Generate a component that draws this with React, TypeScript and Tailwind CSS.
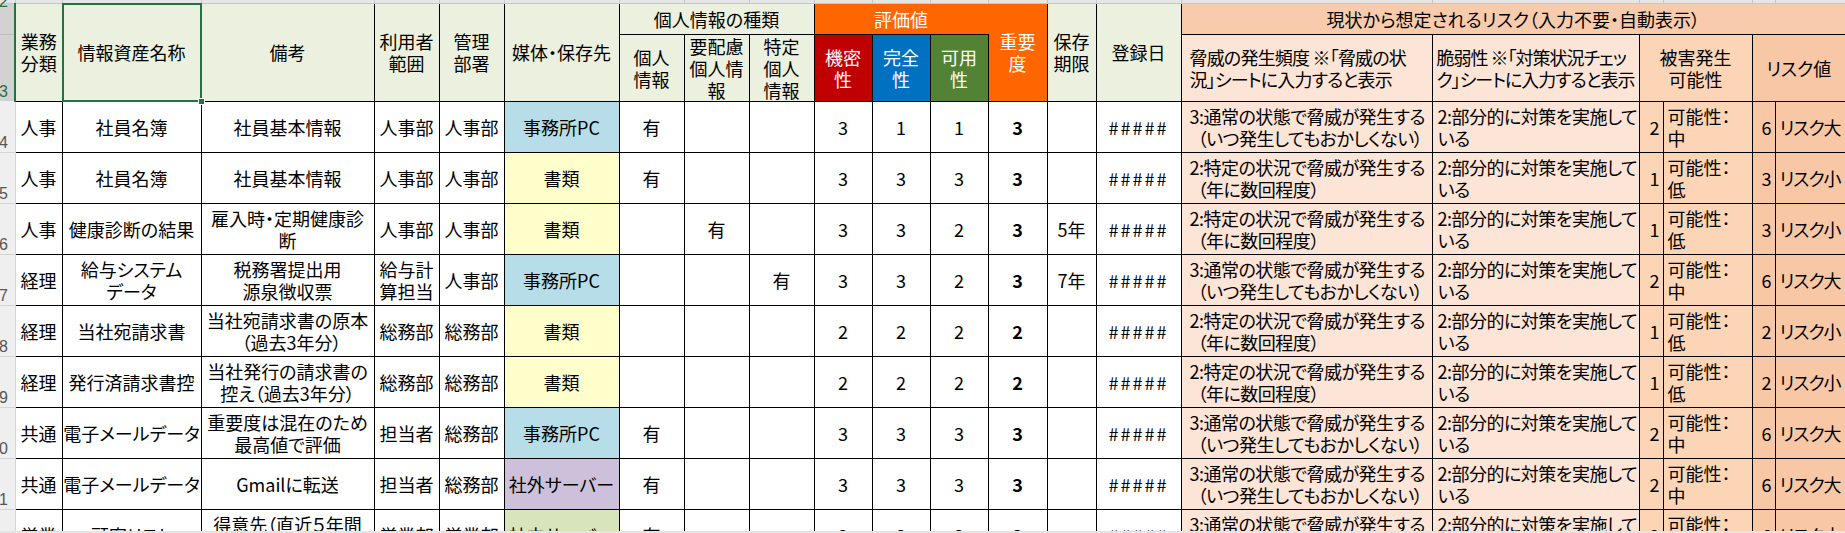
import React from "react";

type Media = "pc" | "doc" | "ext" | "int";

type Row = {
  no: number;
  biz: string;
  name: string[];
  note: string[];
  user: string[];
  dept: string;
  media: Media;
  flags: [boolean, boolean, boolean];
  c: number;
  i: number;
  a: number;
  imp: number;
  keep?: string;
  threat: 2 | 3;
  damage: 1 | 2;
  risk: number;
};

const MEDIA: Record<Media, { label: string; cls: string }> = {
  pc: { label: "事務所PC", cls: "bg-[#b7dee8]" },
  doc: { label: "書類", cls: "bg-[#ffffcc]" },
  ext: { label: "社外サーバー", cls: "bg-[#ccc0da]" },
  int: { label: "社内サーバー", cls: "bg-[#d8e4bc]" },
};

const THREAT: Record<2 | 3, string[]> = {
  3: ["3:通常の状態で脅威が発生する", "（いつ発生してもおかしくない）"],
  2: ["2:特定の状況で脅威が発生する", "（年に数回程度）"],
};

const DAMAGE: Record<1 | 2, string> = { 1: "低", 2: "中" };

const ROWS: Row[] = [
  { no: 4, biz: "人事", name: ["社員名簿"], note: ["社員基本情報"], user: ["人事部"], dept: "人事部", media: "pc", flags: [true, false, false], c: 3, i: 1, a: 1, imp: 3, threat: 3, damage: 2, risk: 6 },
  { no: 5, biz: "人事", name: ["社員名簿"], note: ["社員基本情報"], user: ["人事部"], dept: "人事部", media: "doc", flags: [true, false, false], c: 3, i: 3, a: 3, imp: 3, threat: 2, damage: 1, risk: 3 },
  { no: 6, biz: "人事", name: ["健康診断の結果"], note: ["雇入時・定期健康診", "断"], user: ["人事部"], dept: "人事部", media: "doc", flags: [false, true, false], c: 3, i: 3, a: 2, imp: 3, keep: "5年", threat: 2, damage: 1, risk: 3 },
  { no: 7, biz: "経理", name: ["給与システム", "データ"], note: ["税務署提出用", "源泉徴収票"], user: ["給与計", "算担当"], dept: "人事部", media: "pc", flags: [false, false, true], c: 3, i: 3, a: 2, imp: 3, keep: "7年", threat: 3, damage: 2, risk: 6 },
  { no: 8, biz: "経理", name: ["当社宛請求書"], note: ["当社宛請求書の原本", "（過去3年分）"], user: ["総務部"], dept: "総務部", media: "doc", flags: [false, false, false], c: 2, i: 2, a: 2, imp: 2, threat: 2, damage: 1, risk: 2 },
  { no: 9, biz: "経理", name: ["発行済請求書控"], note: ["当社発行の請求書の", "控え（過去3年分）"], user: ["総務部"], dept: "総務部", media: "doc", flags: [false, false, false], c: 2, i: 2, a: 2, imp: 2, threat: 2, damage: 1, risk: 2 },
  { no: 10, biz: "共通", name: ["電子メールデータ"], note: ["重要度は混在のため", "最高値で評価"], user: ["担当者"], dept: "総務部", media: "pc", flags: [true, false, false], c: 3, i: 3, a: 3, imp: 3, threat: 3, damage: 2, risk: 6 },
  { no: 11, biz: "共通", name: ["電子メールデータ"], note: ["Gmailに転送"], user: ["担当者"], dept: "総務部", media: "ext", flags: [true, false, false], c: 3, i: 3, a: 3, imp: 3, threat: 3, damage: 2, risk: 6 },
  { no: 12, biz: "営業", name: ["顧客リスト"], note: ["得意先（直近５年間", "の取引先情報）"], user: ["営業部"], dept: "営業部", media: "int", flags: [true, false, false], c: 3, i: 3, a: 3, imp: 3, threat: 3, damage: 2, risk: 6 },
];

const cell = "border border-black p-0 text-center align-middle whitespace-nowrap overflow-hidden";
const head = "border border-black p-0 text-center align-middle whitespace-nowrap overflow-hidden bg-[#ebf1de]";

function Lines({ lines }: { lines: string[] }) {
  return (
    <>
      {lines.map((l, k) => (
        <div key={k} className={l.startsWith("（") && k > 0 ? "pl-[8px]" : ""}>
          {l}
        </div>
      ))}
    </>
  );
}

function RowNo({ n, selected }: { n: number; selected?: boolean }) {
  return (
    <div
      className={
        selected
          ? "flex w-[8px] justify-end whitespace-nowrap font-['Liberation_Sans',sans-serif] text-[16px] leading-[18px] text-[#217346]"
          : "flex w-[8px] justify-end whitespace-nowrap font-['Liberation_Sans',sans-serif] text-[16px] leading-[18px] text-[#555]"
      }
    >
      {n}
    </div>
  );
}

function DataRow({ r }: { r: Row }) {
  const m = MEDIA[r.media];
  return (
    <tr className="h-[51px]">
      <td className="border-b border-r border-[#d4d4d4] bg-[#efefef] p-0 align-bottom">
        <RowNo n={r.no} />
      </td>
      <td className={cell}>{r.biz}</td>
      <td className={cell}>
        <Lines lines={r.name} />
      </td>
      <td className={cell}>
        <Lines lines={r.note} />
      </td>
      <td className={cell}>
        <Lines lines={r.user} />
      </td>
      <td className={cell}>{r.dept}</td>
      <td className={`${cell} ${m.cls}`}>{m.label}</td>
      {r.flags.map((f, k) => (
        <td key={k} className={cell}>
          {f ? "有" : ""}
        </td>
      ))}
      <td className={cell}>{r.c}</td>
      <td className={cell}>{r.i}</td>
      <td className={cell}>{r.a}</td>
      <td className={`${cell} font-bold`}>{r.imp}</td>
      <td className={cell}>{r.keep ?? ""}</td>
      <td className={`${cell} tracking-[2px]`}>#####</td>
      <td className="overflow-hidden whitespace-nowrap border border-black bg-[#fce4d6] p-0 pl-[8px] text-left align-middle tracking-[-0.5px]">
        <Lines lines={THREAT[r.threat]} />
      </td>
      <td className="overflow-hidden whitespace-nowrap border border-black bg-[#fce4d6] p-0 pl-[5px] text-left align-middle tracking-[-0.5px]">
        <div>2:部分的に対策を実施して</div>
        <div>いる</div>
      </td>
      <td className="border border-black bg-[#fbd5b5] p-0 pr-[3px] text-right align-middle">{r.damage}</td>
      <td className="overflow-hidden whitespace-nowrap border border-black bg-[#fbd5b5] p-0 pl-[4px] text-left align-middle">
        <div>可能性：</div>
        <div>{DAMAGE[r.damage]}</div>
      </td>
      <td className="border border-black bg-[#f8c8a6] p-0 pr-[3px] text-right align-middle">{r.risk}</td>
      <td className="whitespace-nowrap border border-y border-l border-r-0 border-black bg-[#f8c8a6] p-0 pl-[4px] text-left align-middle tracking-[-1px]">
        {r.risk >= 6 ? "リスク大" : "リスク小"}
      </td>
    </tr>
  );
}

export default function App() {
  return (
    <div className="h-[533px] w-[1845px] overflow-hidden bg-white font-['Noto_Sans_CJK_JP',sans-serif] text-[18px] leading-[22px] text-black [font-feature-settings:'palt']">
      <div className="h-[531px] overflow-hidden">
        <table className="w-[1845px] table-fixed border-collapse">
          <colgroup>
            <col className="w-[15px]" />
            <col className="w-[47px]" />
            <col className="w-[139px]" />
            <col className="w-[173px]" />
            <col className="w-[65px]" />
            <col className="w-[65px]" />
            <col className="w-[115px]" />
            <col className="w-[65px]" />
            <col className="w-[65px]" />
            <col className="w-[65px]" />
            <col className="w-[58px]" />
            <col className="w-[58px]" />
            <col className="w-[58px]" />
            <col className="w-[59px]" />
            <col className="w-[49px]" />
            <col className="w-[85px]" />
            <col className="w-[251px]" />
            <col className="w-[207px]" />
            <col className="w-[24px]" />
            <col className="w-[89px]" />
            <col className="w-[23px]" />
            <col className="w-[70px]" />
          </colgroup>
          <tbody>
            {/* column header strip, scrolled off */}
            <tr className="h-[3px]">
              {Array.from({ length: 22 }).map((_, k) => (
                <td key={k} className="h-[3px] border-b border-r border-[#c6c6c6] bg-[#e6e6e6] p-0 text-[0px] leading-[0px]" />
              ))}
            </tr>

            <tr className="h-[31px]">
              <td className="border-b border-r-2 border-[#bdbdbd] border-r-[#217346] bg-[#d2d2d2] p-0 align-top">
                <div className="-mt-[11px]">
                  <RowNo n={2} selected />
                </div>
              </td>
              <td rowSpan={2} className={head}>
                <div>業務</div>
                <div>分類</div>
              </td>
              <td rowSpan={2} className={`${head} relative overflow-visible`}>
                情報資産名称
                <div className="pointer-events-none absolute -inset-[1px] border-2 border-[#217346]" />
                <div className="absolute -bottom-[4px] -right-[4px] h-[7px] w-[7px] border border-white bg-[#217346]" />
              </td>
              <td rowSpan={2} className={head}>
                備考
              </td>
              <td rowSpan={2} className={head}>
                <div>利用者</div>
                <div>範囲</div>
              </td>
              <td rowSpan={2} className={head}>
                <div>管理</div>
                <div>部署</div>
              </td>
              <td rowSpan={2} className={head}>
                媒体・保存先
              </td>
              <td colSpan={3} className={head}>
                個人情報の種類
              </td>
              <td colSpan={3} className="border border-black border-r-[#ff6600] bg-[#ff6600] p-0 text-center align-middle text-white">
                評価値
              </td>
              <td rowSpan={2} className="border border-black bg-[#ff6600] p-0 text-center align-middle text-white">
                <div>重要</div>
                <div>度</div>
              </td>
              <td rowSpan={2} className={head}>
                <div>保存</div>
                <div>期限</div>
              </td>
              <td rowSpan={2} className={head}>
                登録日
              </td>
              <td colSpan={6} className="whitespace-nowrap border border-y border-l border-r-0 border-black bg-[#f8cbad] p-0 text-center align-middle">
                現状から想定されるリスク（入力不要・自動表示）
              </td>
            </tr>

            <tr className="h-[67px]">
              <td className="border-r-2 border-[#bdbdbd] border-r-[#217346] bg-[#d2d2d2] p-0 align-bottom">
                <RowNo n={3} selected />
              </td>
              <td className={head}>
                <div>個人</div>
                <div>情報</div>
              </td>
              <td className={head}>
                <div>要配慮</div>
                <div>個人情</div>
                <div>報</div>
              </td>
              <td className={head}>
                <div>特定</div>
                <div>個人</div>
                <div>情報</div>
              </td>
              <td className="border border-black bg-[#c00000] p-0 text-center align-middle text-white">
                <div>機密</div>
                <div>性</div>
              </td>
              <td className="border border-black bg-[#0070c0] p-0 text-center align-middle text-white">
                <div>完全</div>
                <div>性</div>
              </td>
              <td className="border border-black bg-[#548235] p-0 text-center align-middle text-white">
                <div>可用</div>
                <div>性</div>
              </td>
              <td className="whitespace-nowrap border border-black bg-[#fce4d6] p-0 pl-[8px] text-left align-middle tracking-[-0.8px]">
                <div>脅威の発生頻度 ※「脅威の状</div>
                <div>況」シートに入力すると表示</div>
              </td>
              <td className="whitespace-nowrap border border-black bg-[#fce4d6] p-0 pl-[4px] text-left align-middle tracking-[-1px]">
                <div>脆弱性 ※「対策状況チェッ</div>
                <div>ク」シートに入力すると表示</div>
              </td>
              <td colSpan={2} className="border border-black bg-[#fbd5b5] p-0 text-center align-middle">
                <div>被害発生</div>
                <div>可能性</div>
              </td>
              <td colSpan={2} className="border border-y border-l border-r-0 border-black bg-[#f8c8a6] p-0 text-center align-middle">
                リスク値
              </td>
            </tr>

            {ROWS.map((r) => (
              <DataRow key={r.no} r={r} />
            ))}
          </tbody>
        </table>
      </div>
      <div className="h-[2px] bg-[#e4e4e4]" />
    </div>
  );
}
